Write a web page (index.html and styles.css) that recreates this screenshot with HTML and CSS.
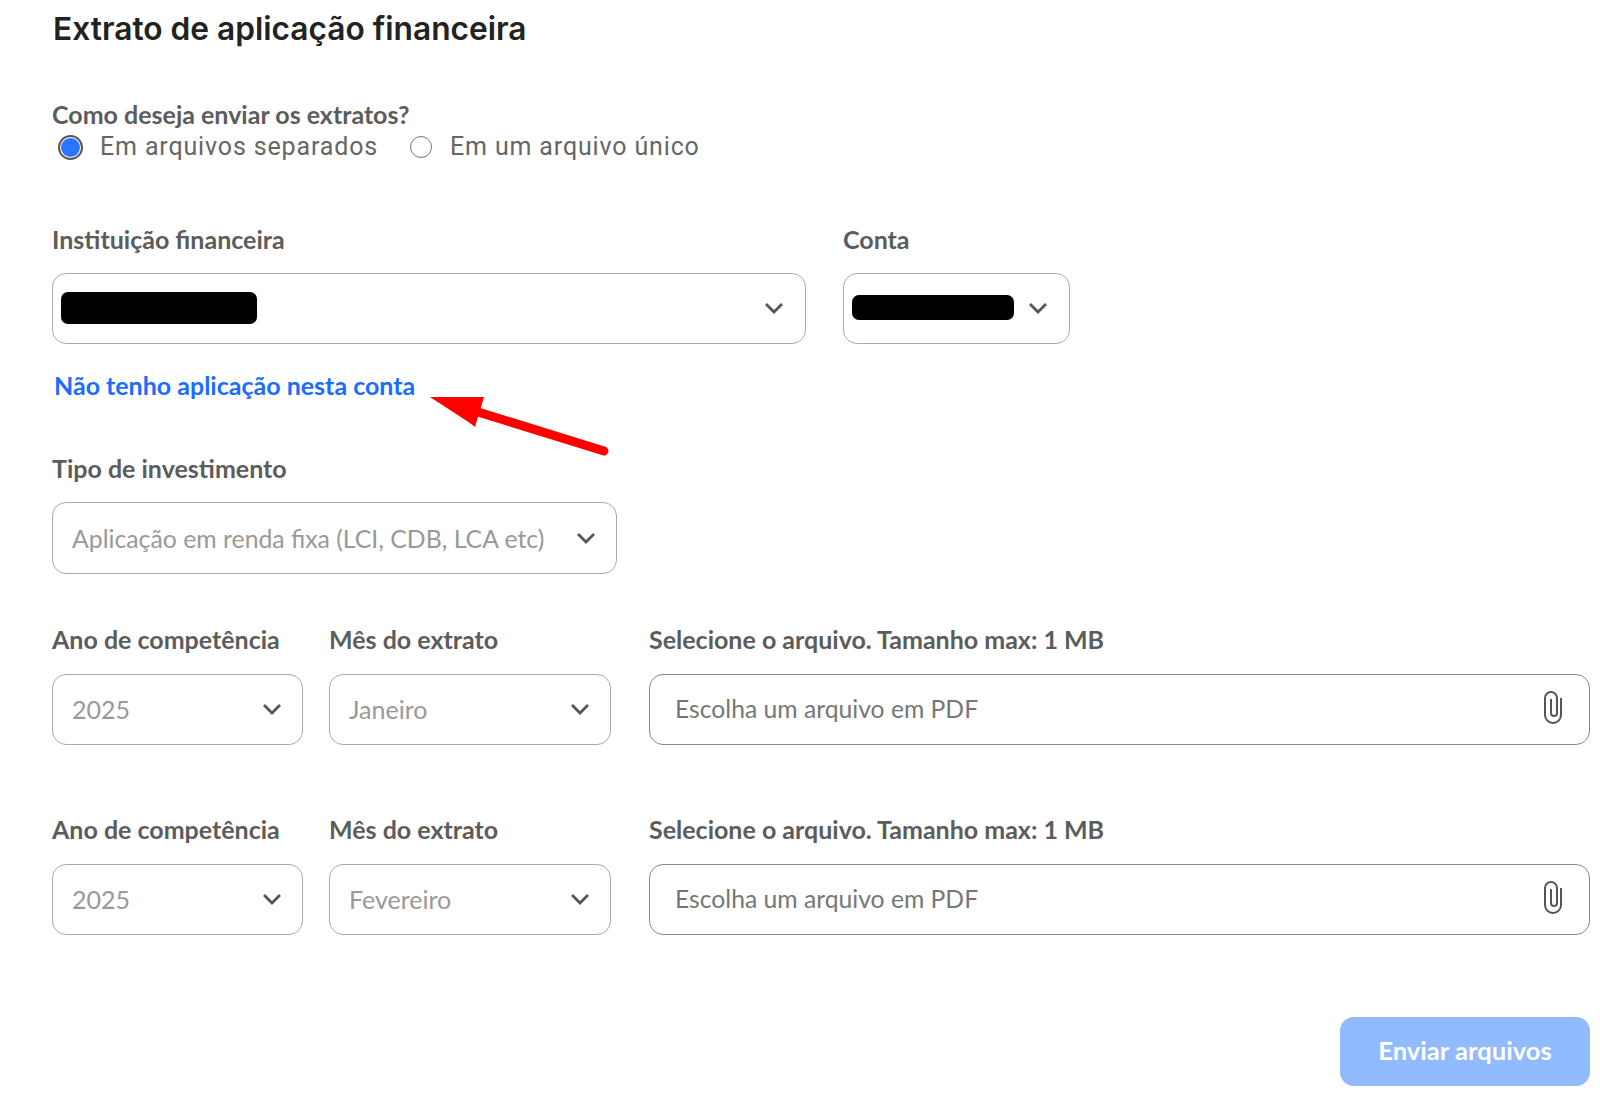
FILE: index.html
```html
<!DOCTYPE html>
<html>
<head>
    <title>Extrato de aplicação financeira</title>
    <link rel="stylesheet" href="styles.css">
</head>
<body>
    <div class="container">
        <h1>Extrato de aplicação financeira</h1>

        <div class="send-mode">
            <p class="label">Como deseja enviar os extratos?</p>
            <div class="radio-group">
                <span class="radio-option first"><span class="radio checked"></span>Em arquivos separados</span>
                <span class="radio-option"><span class="radio"></span>Em um arquivo único</span>
            </div>
        </div>

        <div class="row account-row">
            <div class="field institution">
                <p class="label">Instituição financeira</p>
                <div class="select">
                    <span class="redacted redacted-inst"></span>
                    <svg class="chevron" viewBox="0 0 20 12"><path d="M2 2l8 8 8-8"/></svg>
                </div>
            </div>
            <div class="field account">
                <p class="label">Conta</p>
                <div class="select">
                    <span class="redacted redacted-account"></span>
                    <svg class="chevron" viewBox="0 0 20 12"><path d="M2 2l8 8 8-8"/></svg>
                </div>
            </div>
        </div>

        <a class="no-investment" href="#">Não tenho aplicação nesta conta</a>
        <svg class="arrow" viewBox="0 0 180 60">
            <path class="arrow-line" d="M48 15L174 54"/>
            <path class="arrow-head" d="M0 0H54L45 30L40 26Z"/>
        </svg>

        <div class="field investment">
            <p class="label">Tipo de investimento</p>
            <div class="select">
                <span class="placeholder">Aplicação em renda fixa (LCI, CDB, LCA etc)</span>
                <svg class="chevron" viewBox="0 0 20 12"><path d="M2 2l8 8 8-8"/></svg>
            </div>
        </div>

        <div class="row statement-row">
            <div class="field year">
                <p class="label">Ano de competência</p>
                <div class="select">
                    <span class="placeholder">2025</span>
                    <svg class="chevron" viewBox="0 0 20 12"><path d="M2 2l8 8 8-8"/></svg>
                </div>
            </div>
            <div class="field month">
                <p class="label">Mês do extrato</p>
                <div class="select">
                    <span class="placeholder">Janeiro</span>
                    <svg class="chevron" viewBox="0 0 20 12"><path d="M2 2l8 8 8-8"/></svg>
                </div>
            </div>
            <div class="field file">
                <p class="label">Selecione o arquivo. Tamanho max: 1 MB</p>
                <div class="select file-input">
                    <span class="file-text">Escolha um arquivo em PDF</span>
                    <svg class="clip" viewBox="0 0 18 34"><path d="M17 8V25A8 8 0 0 1 1 25V8A6 6 0 0 1 13 8V23A3 3 0 0 1 7 23V9"/></svg>
                </div>
            </div>
        </div>

        <div class="row statement-row second">
            <div class="field year">
                <p class="label">Ano de competência</p>
                <div class="select">
                    <span class="placeholder">2025</span>
                    <svg class="chevron" viewBox="0 0 20 12"><path d="M2 2l8 8 8-8"/></svg>
                </div>
            </div>
            <div class="field month">
                <p class="label">Mês do extrato</p>
                <div class="select">
                    <span class="placeholder">Fevereiro</span>
                    <svg class="chevron" viewBox="0 0 20 12"><path d="M2 2l8 8 8-8"/></svg>
                </div>
            </div>
            <div class="field file">
                <p class="label">Selecione o arquivo. Tamanho max: 1 MB</p>
                <div class="select file-input">
                    <span class="file-text">Escolha um arquivo em PDF</span>
                    <svg class="clip" viewBox="0 0 18 34"><path d="M17 8V25A8 8 0 0 1 1 25V8A6 6 0 0 1 13 8V23A3 3 0 0 1 7 23V9"/></svg>
                </div>
            </div>
        </div>

        <div class="actions">
            <button>Enviar arquivos</button>
        </div>
    </div>
</body>
</html>
```

FILE: styles.css
```css
/* General Styles */
body {
    font-family: Lato, "Liberation Sans", sans-serif;
    background-color: #fff;
    margin: 0;
    padding: 0;
    color: #555;
}
.container {
    position: relative;
    height: 1117px;
    box-sizing: border-box;
    padding: 9px 10px 0 52px;
    overflow: hidden;
}
h1 {
    margin: 0 0 0 1px;
    font-family: Inter, sans-serif;
    font-size: 31.7px;
    line-height: 40px;
    font-weight: 600;
    color: #222;
}
.label {
    margin: 0 0 20px;
    font-size: 25px;
    line-height: 28px;
    font-weight: 700;
    color: #5c5c5c;
}
/* Radios */
.send-mode {
    margin-top: 51px;
}
.send-mode .label {
    margin-bottom: 2px;
}
.radio-group {
    display: flex;
    align-items: center;
    gap: 32px;
    margin-left: 6px;
    height: 32px;
}
.radio-option {
    display: flex;
    align-items: center;
    gap: 18px;
    font-family: Roboto, sans-serif;
    font-size: 25px;
    letter-spacing: 0.85px;
    color: #666;
}
.radio-option.first {
    gap: 17px;
}
.radio {
    width: 20px;
    height: 20px;
    margin-top: 2px;
    border: 1px solid #777;
    border-radius: 50%;
    box-sizing: content-box;
}
.radio.checked {
    width: 19px;
    height: 19px;
    border: 2px solid #555;
    padding: 1px;
    background-color: #2a75ff;
    background-clip: content-box;
}
/* Fields */
.row {
    display: flex;
}
.account-row {
    margin-top: 63px;
    gap: 37px;
}
.select {
    display: flex;
    align-items: center;
    justify-content: space-between;
    box-sizing: border-box;
    height: 71px;
    padding: 0 20px 2px 19px;
    border: 1px solid #aaa;
    border-radius: 14px;
    font-size: 25px;
}
.institution { width: 754px; }
.account { width: 227px; }
.institution .select { padding: 0 21px 2px 8px; }
.account .select { padding: 0 21px 2px 8px; }
.redacted {
    background-color: #000;
    border-radius: 7px;
}
.redacted-inst {
    width: 196px;
    height: 32px;
}
.redacted-account {
    width: 162px;
    height: 25px;
}
.chevron {
    width: 20px;
    height: 12px;
    flex: none;
}
.chevron path {
    fill: none;
    stroke: #555;
    stroke-width: 2.8;
}
.placeholder {
    color: #999;
}
.investment .select {
    height: 72px;
    padding-bottom: 0;
}
.investment .placeholder {
    font-size: 24.8px;
}
.no-investment {
    display: block;
    margin-top: 24px;
    margin-left: 2px;
    font-size: 25px;
    line-height: 34px;
    font-weight: 700;
    color: #1a6dff;
    text-decoration: none;
}
/* Arrow drawn over the page */
.arrow {
    position: absolute;
    left: 430px;
    top: 397px;
    width: 180px;
    height: 60px;
}
.arrow-line {
    fill: none;
    stroke: #f00;
    stroke-width: 9;
    stroke-linecap: round;
}
.arrow-head {
    fill: #f00;
}
.investment {
    width: 565px;
    margin-top: 52px;
}
.statement-row {
    margin-top: 51px;
}
.statement-row .label {
    margin-bottom: 21px;
}
.statement-row.second {
    margin-top: 70px;
}
.year { width: 251px; margin-right: 26px; }
.month { width: 282px; margin-right: 38px; }
.file { flex: 1; }
.file-input {
    border-color: #888;
    padding: 0 27px 2px 25px;
}
.file-text {
    font-size: 24.7px;
    color: #777;
}
.clip {
    width: 18px;
    height: 34px;
    flex: none;
    margin-top: -3px;
}
.clip path {
    fill: none;
    stroke: #555;
    stroke-width: 2;
}
/* Submit */
.actions {
    display: flex;
    justify-content: flex-end;
    margin-top: 82px;
}
button {
    width: 250px;
    height: 69px;
    padding: 0 0 3px;
    border: none;
    border-radius: 14px;
    background-color: #92bbff;
    color: #fff;
    font-family: inherit;
    font-size: 25.6px;
    font-weight: 700;
}
```
